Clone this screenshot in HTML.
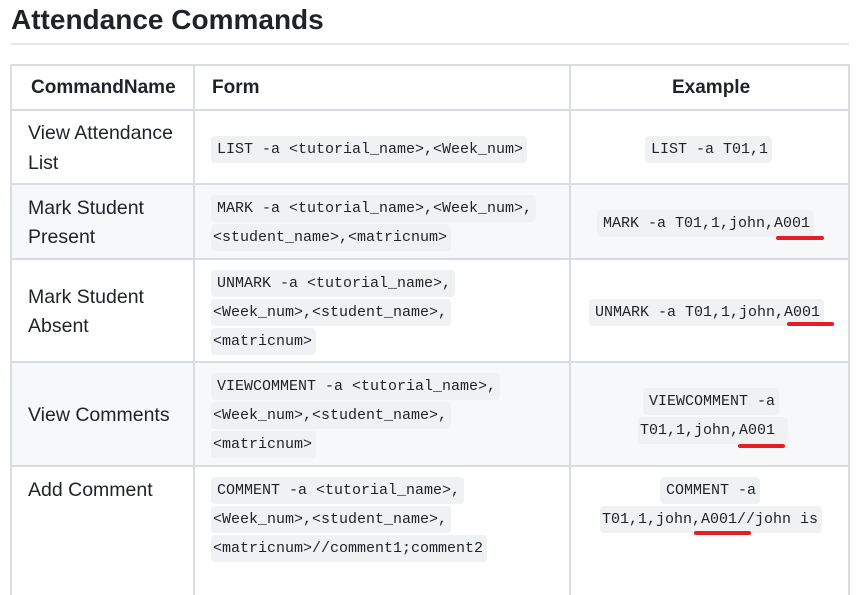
<!DOCTYPE html>
<html><head><meta charset="utf-8"><style>
body{margin:0;width:865px;height:589px;background:#fff;position:relative;overflow:hidden;font-family:"Liberation Sans","DejaVu Sans",sans-serif;color:#1f2328}
.a{position:absolute}
h1{position:absolute;left:11px;top:2px;margin:0;font-size:28px;font-weight:bold;line-height:36px;color:#1f2328}
.hl{position:absolute;left:11px;top:43px;width:838px;height:2px;background:#e4e7eb}
.v{position:absolute;width:2px;background:#d9dde2;top:65px;height:530px}
.h{position:absolute;height:2px;background:#d9dde2;left:11px;width:839px}
.t{position:absolute;font-size:19.5px;line-height:30px;white-space:nowrap}
.b{font-size:19px;font-weight:bold}
.c{position:absolute;font-family:"Liberation Mono","DejaVu Sans Mono",monospace;font-size:15px;height:27px;line-height:27px;background:#eff1f3;border-radius:4px;white-space:pre;padding:0 4px 0 2px;color:#1f2328}
.f{padding-left:6px}
.r{position:absolute;height:4px;background:#e51e25;border-radius:2px}
</style></head><body>
<h1>Attendance Commands</h1>
<div class="hl"></div>
<div class="a" style="left:11px;top:184px;width:838px;height:75px;background:#f6f8fa"></div>
<div class="a" style="left:11px;top:362px;width:838px;height:104px;background:#f6f8fa"></div>
<div class="v" style="left:10px"></div>
<div class="v" style="left:193px"></div>
<div class="v" style="left:569px"></div>
<div class="v" style="left:848px"></div>
<div class="h" style="top:64px"></div>
<div class="h" style="top:109px"></div>
<div class="h" style="top:183px"></div>
<div class="h" style="top:258px"></div>
<div class="h" style="top:361px"></div>
<div class="h" style="top:465px"></div>

<div class="t b" style="left:31px;top:73px">CommandName</div>
<div class="t b" style="left:212px;top:73px">Form</div>
<div class="t b" style="left:672px;top:73px">Example</div>

<div class="t" style="left:28px;top:118px">View Attendance</div>
<div class="t" style="left:28px;top:148px">List</div>
<div class="c f" style="left:211px;top:136px">LIST -a &lt;tutorial_name&gt;,&lt;Week_num&gt;</div>
<div class="c f" style="left:645px;top:136px">LIST -a T01,1</div>

<div class="t" style="left:28px;top:193px">Mark Student</div>
<div class="t" style="left:28px;top:222px">Present</div>
<div class="c f" style="left:211px;top:195px">MARK -a &lt;tutorial_name&gt;,&lt;Week_num&gt;,</div>
<div class="c" style="left:211px;top:224px">&lt;student_name&gt;,&lt;matricnum&gt;</div>
<div class="c f" style="left:597px;top:210px">MARK -a T01,1,john,A001</div>
<div class="r" style="left:776px;top:236px;width:48px"></div>

<div class="t" style="left:28px;top:282px">Mark Student</div>
<div class="t" style="left:28px;top:311px">Absent</div>
<div class="c f" style="left:211px;top:270px">UNMARK -a &lt;tutorial_name&gt;,</div>
<div class="c" style="left:211px;top:299px">&lt;Week_num&gt;,&lt;student_name&gt;,</div>
<div class="c" style="left:211px;top:328px">&lt;matricnum&gt;</div>
<div class="c f" style="left:589px;top:299px">UNMARK -a T01,1,john,A001</div>
<div class="r" style="left:787px;top:322px;width:47px"></div>

<div class="t" style="left:28px;top:400px">View Comments</div>
<div class="c f" style="left:211px;top:373px">VIEWCOMMENT -a &lt;tutorial_name&gt;,</div>
<div class="c" style="left:211px;top:402px">&lt;Week_num&gt;,&lt;student_name&gt;,</div>
<div class="c" style="left:211px;top:431px">&lt;matricnum&gt;</div>
<div class="c f" style="left:643px;top:388px">VIEWCOMMENT -a</div>
<div class="c" style="left:638px;top:417px">T01,1,john,A001 </div>
<div class="r" style="left:738px;top:444px;width:47px"></div>

<div class="t" style="left:28px;top:475px">Add Comment</div>
<div class="c f" style="left:211px;top:477px">COMMENT -a &lt;tutorial_name&gt;,</div>
<div class="c" style="left:211px;top:506px">&lt;Week_num&gt;,&lt;student_name&gt;,</div>
<div class="c" style="left:211px;top:535px">&lt;matricnum&gt;//comment1;comment2</div>
<div class="c f" style="left:660px;top:477px">COMMENT -a</div>
<div class="c" style="left:600px;top:506px">T01,1,john,A001//john is</div>
<div class="r" style="left:694px;top:531px;width:57px"></div>
</body></html>
